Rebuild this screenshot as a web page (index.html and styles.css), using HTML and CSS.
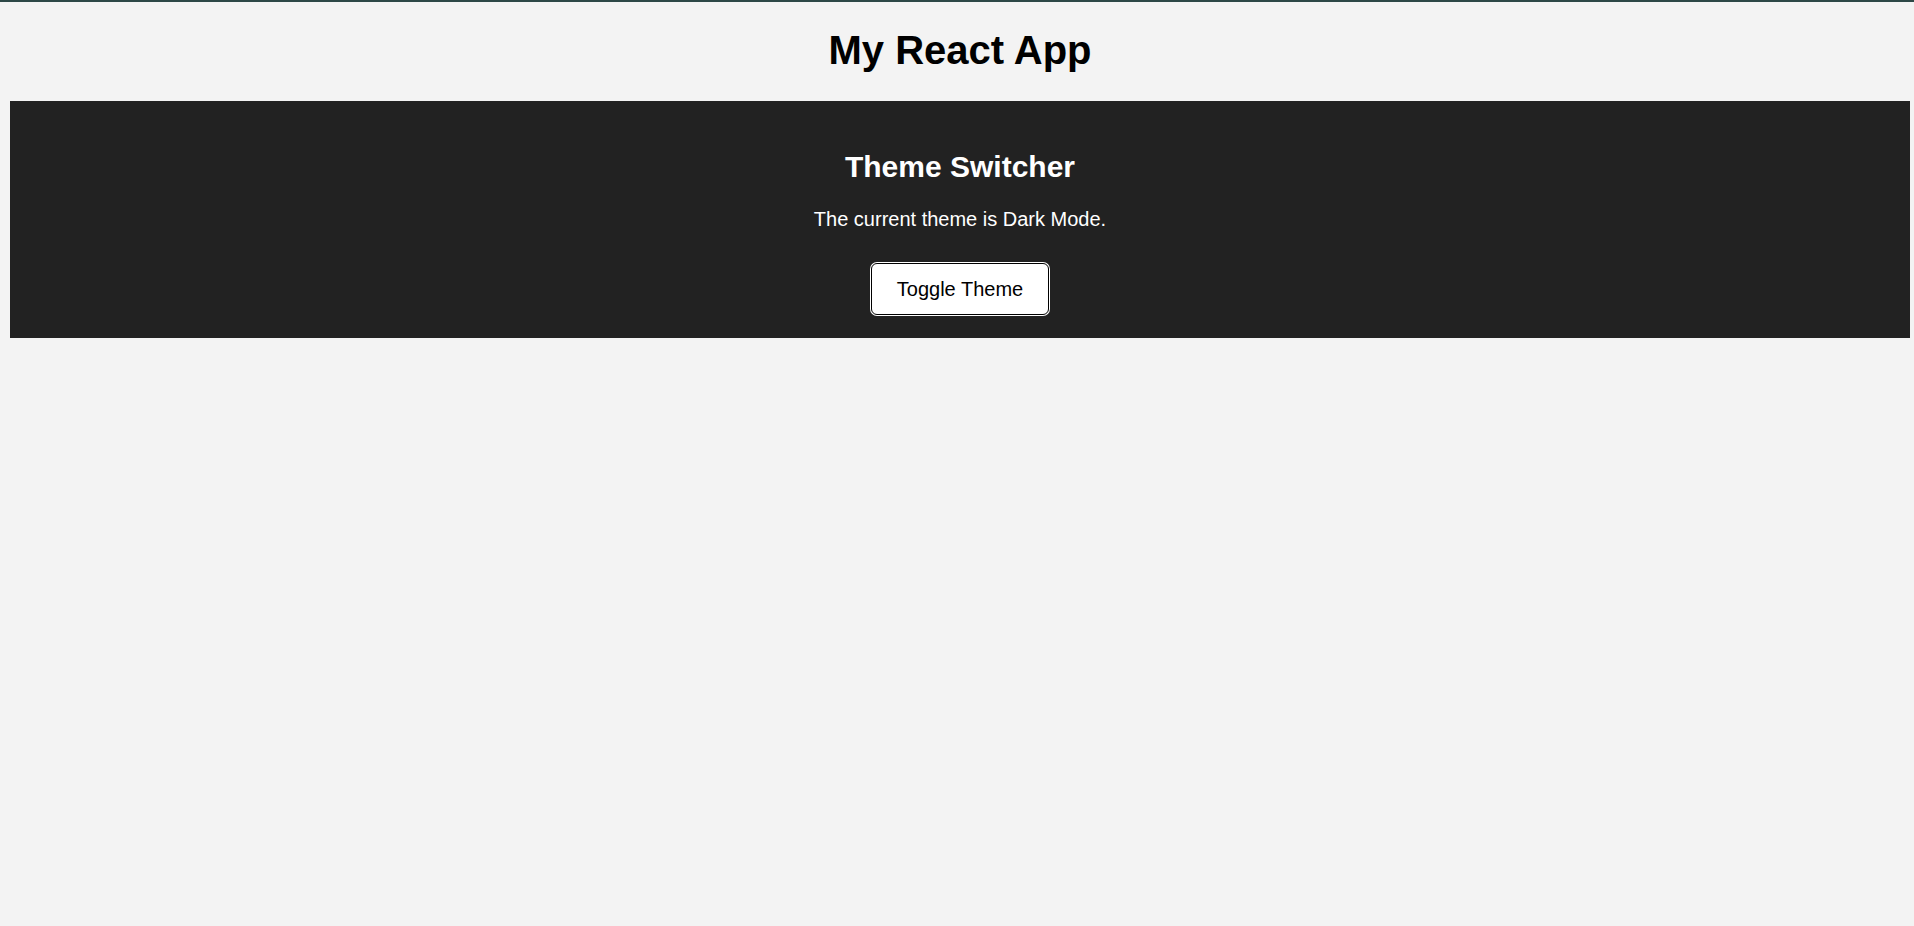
FILE: index.html
```html
<!DOCTYPE html>
<html lang="en">
<head>
  <meta charset="UTF-8" />
  <meta name="viewport" content="width=device-width, initial-scale=1.0" />
  <title>My React App</title>
  <link rel="stylesheet" href="styles.css">
</head>
<body>
  <div id="root">
    <h1 class="app-title">My React App</h1>
    <div class="theme-box dark">
      <h2 class="theme-title">Theme Switcher</h2>
      <p class="theme-text">The current theme is <span id="theme-name">Dark Mode</span>.</p>
      <button class="toggle-btn" onclick="toggleTheme()">Toggle Theme</button>
    </div>
  </div>

  <script>
    function toggleTheme() {
      const box = document.querySelector('.theme-box');
      const dark = box.classList.toggle('dark');
      box.classList.toggle('light', !dark);
      document.getElementById('theme-name').textContent = dark ? 'Dark Mode' : 'Light Mode';
    }
  </script>
</body>
</html>
```

FILE: styles.css
```css
html {
  overflow-x: hidden;
  background-color: #f3f3f3;
}

body {
  margin: 0;
  width: 1900px;
  padding: 0 10px;
  border-top: 2px solid #2d4846;
  background-color: #f3f3f3;
  font-family: "Liberation Sans", Arial, sans-serif;
  color: #000;
  text-align: center;
}

.app-title {
  font-size: 40px;
  line-height: 46px;
  font-weight: bold;
  margin: 25px 0 28px;
}

.theme-box {
  display: flex;
  flex-direction: column;
  align-items: center;
  padding: 48px 20px 23px;
}

.theme-box.dark {
  background-color: #222222;
  color: #ffffff;
}

.theme-box.light {
  background-color: #ffffff;
  color: #222222;
}

.theme-title {
  font-size: 30px;
  line-height: 35px;
  font-weight: bold;
  margin: 0 0 24px;
}

.theme-text {
  font-size: 20px;
  line-height: 23px;
  margin: 0 0 32px;
}

.toggle-btn {
  box-sizing: border-box;
  height: 52px;
  padding: 0 24.5px;
  font-family: "Liberation Sans", Arial, sans-serif;
  font-size: 20px;
  color: #000;
  background-color: #ffffff;
  border: 1px solid #000;
  border-radius: 6px;
  box-shadow: 0 0 0 1px #ffffff;
  cursor: pointer;
}
```
